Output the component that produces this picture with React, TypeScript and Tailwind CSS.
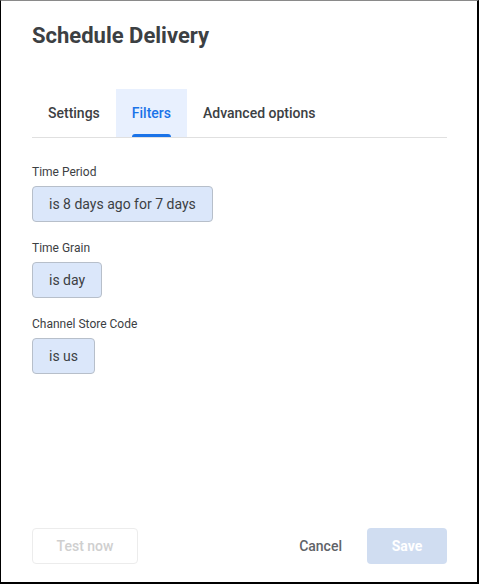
import React from "react";

const Chip = ({ children }: { children: React.ReactNode }) => (
  <div className="inline-flex h-[36px] items-center rounded-[4px] border border-[#b7bfca] bg-[#dbe7fa] px-[16px] text-[14px] text-[#3c4043]">
    {children}
  </div>
);

const Section = ({ label, value }: { label: string; value: string }) => (
  <div className="flex flex-col items-start">
    <div className="h-[16px] text-[12px] leading-[16px] text-[#3c4043]">{label}</div>
    <div className="mt-[6px]">
      <Chip>{value}</Chip>
    </div>
  </div>
);

export default function App() {
  return (
    <div
      className="flex h-[584px] w-[479px] flex-col border-t border-l border-r-2 border-b-2 border-t-[#8a8a8a] border-l-black border-r-black border-b-black bg-white"
      style={{ fontFamily: "Roboto, 'Noto Sans', sans-serif" }}
    >
      <div className="pl-[31px] pr-[30px] pt-[21px]">
        <h1 className="text-[22px] font-bold leading-[28px] text-[#3c4043]">Schedule Delivery</h1>
      </div>
      <div className="ml-[31px] mr-[30px] mt-[39px] flex border-b border-[#e0e0e0]">
        <div className="flex h-[48px] items-center px-[16px] text-[14px] font-medium text-[#3c4043]">Settings</div>
        <div className="relative flex h-[48px] items-center bg-[#e8f0fe] px-[16px] text-[14px] font-medium text-[#1a73e8]">
          Filters
          <div className="absolute bottom-0 left-[16px] right-[16px] h-[3px] rounded-t-[3px] bg-[#1a73e8]" />
        </div>
        <div className="flex h-[48px] items-center px-[16px] text-[14px] font-medium text-[#3c4043]">Advanced options</div>
      </div>
      <div className="flex flex-col gap-[18px] pl-[31px] pr-[30px] pt-[26px]">
        <Section label="Time Period" value="is 8 days ago for 7 days" />
        <Section label="Time Grain" value="is day" />
        <Section label="Channel Store Code" value="is us" />
      </div>
      <div className="mt-auto flex items-center pl-[31px] pr-[30px] pb-[18px]">
        <div className="flex h-[36px] w-[106px] items-center justify-center rounded-[4px] border border-[#ececec] text-[14px] font-medium text-[#cfcfcf]">
          Test now
        </div>
        <div className="ml-auto flex h-[36px] items-center px-[8px] text-[14px] font-medium text-[#5f6368]">Cancel</div>
        <div className="ml-[17px] flex h-[36px] w-[80px] items-center justify-center rounded-[4px] bg-[#d0ddf1] text-[14px] font-bold text-white">
          Save
        </div>
      </div>
    </div>
  );
}
